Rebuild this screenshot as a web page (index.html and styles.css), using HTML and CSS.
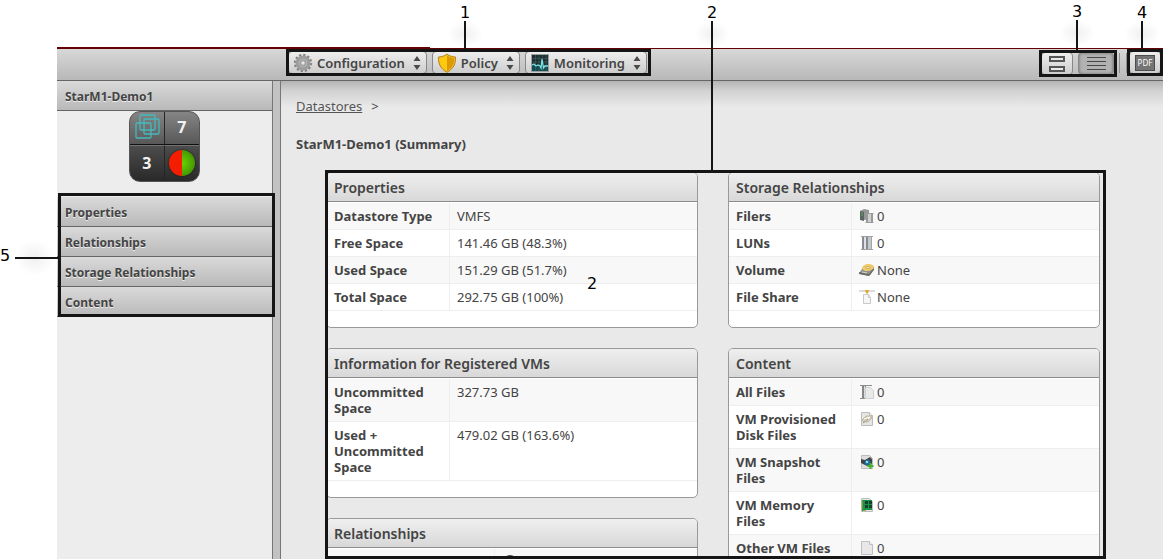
FILE: index.html
```html
<!DOCTYPE html>
<html lang="en">
<head>
<meta charset="utf-8">
<meta name="viewport" content="width=device-width, initial-scale=1">
<title>StarM1-Demo1 (Summary)</title>
<link rel="stylesheet" href="styles.css">
</head>
<body>
<div class="app">
  <header class="toolbar">
    <div class="framed menus">
      <button class="menu-button" type="button">
        <svg class="menu-icon" width="20" height="20" viewBox="0 0 20 20" aria-hidden="true">
          <circle cx="10" cy="10" r="7.700" fill="none" stroke="#858585" stroke-width="3" stroke-dasharray="2.200 1.830"/>
          <circle cx="10" cy="10" r="5" fill="none" stroke="#9c9c9c" stroke-width="5"/>
          <circle cx="10" cy="10" r="4" fill="none" stroke="#b5b5b5" stroke-width="1"/>
          <circle cx="10" cy="10" r="2.200" fill="#e6e6e6" stroke="#858585" stroke-width=".7"/>
        </svg>
        Configuration
        <svg class="arrows" width="8" height="14" viewBox="0 0 8 14" aria-hidden="true"><path d="M4 0 7.500 5H.5zM4 14 .5 9h7z" fill="#4a4a4a"/></svg>
      </button>
      <button class="menu-button" type="button">
        <svg class="menu-icon" width="20" height="20" viewBox="0 0 20 20" aria-hidden="true">
          <path d="M10 1C8 2.700 5 4 1.500 4 1 11 4 16 10 19.300 16 16 19 11 18.500 4 15 4 12 2.700 10 1z" fill="#f3c22e" stroke="#b98218"/>
          <path d="M10 2.500C8 4 6 4.700 2.700 5.200 2.700 11 5.200 15.500 10 18z" fill="#ffc90d"/>
          <path d="M10 2.500c2 1.500 4 2.200 7.300 2.700 0 5.800-2.500 10.300-7.300 12.800z" fill="#dd9a05"/>
        </svg>
        Policy
        <svg class="arrows" width="8" height="14" viewBox="0 0 8 14" aria-hidden="true"><path d="M4 0 7.500 5H.5zM4 14 .5 9h7z" fill="#4a4a4a"/></svg>
      </button>
      <button class="menu-button" type="button">
        <svg class="menu-icon" width="20" height="20" viewBox="0 0 20 20" aria-hidden="true">
          <rect x="1" y="1" width="18" height="18" fill="#9c9f9f"/><rect x="2" y="2" width="16" height="16" fill="#1c2f30"/>
          <path d="M2 13l2-1 2 2 2-1 2 1 1 1 1-1 1 1 5-1v4H2z" fill="#0f4d50"/>
          <path d="M2 5.500h16M2 9h16M2 12.500h16M5.500 2v16M9 2v16M12.500 2v16M16 2v16" stroke="#4c6262" stroke-width=".6"/>
          <path d="M2 12l2-1 2 2 2-1 2 1 1 2 1-9 1.500 9 1.500-2h3" fill="none" stroke="#75e2e4" stroke-width="1.300"/>
        </svg>
        Monitoring
        <svg class="arrows" width="8" height="14" viewBox="0 0 8 14" aria-hidden="true"><path d="M4 0 7.500 5H.5zM4 14 .5 9h7z" fill="#4a4a4a"/></svg>
      </button>
      <span class="callout callout-menus">1</span>
    </div>
    <div class="framed views">
      <button class="tool-button" type="button" aria-label="Stacked view">
        <svg width="18" height="18" viewBox="0 0 18 18" aria-hidden="true"><g fill="#e8e8e8" stroke="#555" stroke-width="2"><path d="M2 2h14v4H2zM2 12h14v4H2z"/></g></svg>
      </button>
      <button class="tool-button pressed" type="button" aria-label="List view" aria-pressed="true">
        <svg width="19" height="15" viewBox="0 0 19 15" aria-hidden="true"><path d="M0 1.500h19M0 5.500h19M0 9.500h19M0 13.500h19" stroke="#484848"/></svg>
      </button>
      <span class="callout callout-views">3</span>
    </div>
    <span class="divider"></span>
    <div class="framed export">
      <button class="tool-button" type="button"><span class="pdf">PDF</span></button>
      <span class="callout callout-export">4</span>
    </div>
  </header>

  <div class="body">
    <aside class="sidebar">
      <h2 class="side-title">StarM1-Demo1</h2>
      <div class="badge">
        <span class="cell"><svg width="26" height="26" viewBox="0 0 26 26" fill="none" stroke="#45b9bd" stroke-width="1.300" aria-hidden="true"><rect x="6" y="1" width="15" height="15" rx="1"/><rect x="10" y="5" width="15" height="15" rx="1"/><rect x="2" y="9" width="15" height="15" rx="1"/></svg></span>
        <span class="cell">7</span>
        <span class="cell">3</span>
        <span class="cell"><span class="health"></span></span>
      </div>
      <nav class="framed side-nav">
        <a href="#properties">Properties</a>
        <a href="#relationships">Relationships</a>
        <a href="#storage">Storage Relationships</a>
        <a href="#content">Content</a>
        <span class="callout callout-nav">5</span>
      </nav>
    </aside>
    <div class="gutter"></div>
    <main class="main">
      <p class="crumbs"><a href="#datastores">Datastores</a><span>&gt;</span></p>
      <h1 class="page-title">StarM1-Demo1 (Summary)</h1>
      <div class="framed report">
        <div class="columns">
          <div class="column">
            <section class="panel" id="properties">
              <h2>Properties</h2>
              <table>
                <tr><th scope="row">Datastore Type</th><td>VMFS</td></tr>
                <tr><th scope="row">Free Space</th><td>141.46 GB (48.3%)</td></tr>
                <tr><th scope="row">Used Space</th><td>151.29 GB (51.7%)</td></tr>
                <tr><th scope="row">Total Space</th><td>292.75 GB (100%)</td></tr>
              </table>
            </section>
            <section class="panel">
              <h2>Information for Registered VMs</h2>
              <table>
                <tr><th scope="row">Uncommitted Space</th><td>327.73 GB</td></tr>
                <tr><th scope="row">Used + Uncommitted Space</th><td>479.02 GB (163.6%)</td></tr>
              </table>
            </section>
            <section class="panel wide-label" id="relationships">
              <h2>Relationships</h2>
              <table>
                <tr><td></td><td><svg class="icon" width="16" height="16" viewBox="0 0 16 16" aria-hidden="true"><circle cx="8" cy="8" r="7" fill="#444"/></svg></td></tr>
              </table>
            </section>
          </div>
          <div class="column">
            <section class="panel" id="storage">
              <h2>Storage Relationships</h2>
              <table>
                <tr><th scope="row">Filers</th><td><svg class="icon" width="16" height="16" viewBox="0 0 16 16" aria-hidden="true"><path d="M1 3l4-2 5 1v9l-4 1-5-1z" fill="#959796"/><path d="M1 3l4 1v9l-4-1z" fill="#5d6560"/><path d="M2 5l2 .5M2 7l2 .5" stroke="#58a365"/><path d="M7 6h7v8H7z" fill="#cfcfcf"/><path d="M7 6h2v8H7zM12 6h2v8h-2z" fill="#999"/><path d="M6.500 5.500h8M6.500 14.500h8" stroke="#9d9d9d"/></svg>0</td></tr>
                <tr><th scope="row">LUNs</th><td><svg class="icon" width="16" height="16" viewBox="0 0 16 16" aria-hidden="true"><path d="M3 2h10v12H3z" fill="#c5c9cc"/><path d="M3 2h2v12H3zM7 2h2v12H7z" fill="#858b91"/><path d="M12 2h1v12h-1z" fill="#a0a5aa"/><path d="M5 2h2v12H5z" fill="#dfe2e4"/><path d="M2 1.500h12M2 14.500h12" stroke="#9da1a5"/></svg>0</td></tr>
                <tr><th scope="row">Volume</th><td><svg class="icon" width="16" height="16" viewBox="0 0 16 16" aria-hidden="true"><path d="M1 10l4-6h10l-3 8-2 2-9-2z" fill="#92928d"/><path d="M0 10l10 2 5-7v3l-5 6-10-2z" fill="#6b6b65"/><ellipse cx="9" cy="5.500" rx="6" ry="3.500" fill="#edcb6d" transform="rotate(-8 9 5.500)"/><ellipse cx="9" cy="5.500" rx="2" ry="1" fill="#fff3bd" stroke="#b08a34" stroke-width=".6"/><path d="M3 10l5 1" stroke="#d5d5d0"/></svg>None</td></tr>
                <tr><th scope="row">File Share</th><td><svg class="icon" width="16" height="16" viewBox="0 0 16 16" aria-hidden="true"><path d="M0 2h16" stroke="#b8b8b8"/><path d="M8 3v2" stroke="#aaa"/><path d="M6 1h4l-1 3H7z" fill="#e4a727"/><path d="M4.500 5.500h5l2 3v6h-7z" fill="#f6f6f6" stroke="#c9c9c9"/><path d="M9.500 5.500v3h2" fill="#ddd" stroke="#c9c9c9"/></svg>None</td></tr>
              </table>
            </section>
            <section class="panel" id="content">
              <h2>Content</h2>
              <table>
                <tr><th scope="row">All Files</th><td><svg class="icon" width="16" height="16" viewBox="0 0 16 16" aria-hidden="true"><path d="M3 2h4v12H3z" fill="#83878a"/><path d="M5 2h1v12H5z" fill="#d8dadb"/><path d="M1 1.500h12M1 14.500h5" stroke="#888d90"/><path d="M6.500 3.500h5l3 3v8h-8z" fill="#e9e9e9" stroke="#cfcfcf"/></svg>0</td></tr>
                <tr><th scope="row">VM Provisioned Disk Files</th><td><svg class="icon" width="16" height="16" viewBox="0 0 16 16" aria-hidden="true"><path d="M2.500 1.500h8l3 3v10h-11z" fill="#e5e5e3" stroke="#bcbcbc"/><path d="M10.500 1.500v3h3" fill="#fff" stroke="#bcbcbc"/><path d="M3 9l4-4h5l1 2-4 4H5z" fill="#d5cebb" stroke="#b5ab93" stroke-width=".7"/><path d="M5 8l6-2-7 6" fill="none" stroke="#fff"/><path d="M4 12l5-4" stroke="#958b72"/></svg>0</td></tr>
                <tr><th scope="row">VM Snapshot Files</th><td><svg class="icon" width="16" height="16" viewBox="0 0 16 16" aria-hidden="true"><path d="M2.500 1.500h8l3 3v10h-11z" fill="#dedede" stroke="#bcbcbc"/><path d="M2 5l4 1 5-3 2 2v5l-5 2-6-3z" fill="#414548"/><circle cx="8.500" cy="8.500" r="2.800" fill="#1a6d9c"/><circle cx="8" cy="8" r="1.300" fill="#88d9f3"/><path d="M11.500 9v6M8.500 12h6" stroke="#43b02e" stroke-width="2"/></svg>0</td></tr>
                <tr><th scope="row">VM Memory Files</th><td><svg class="icon" width="16" height="16" viewBox="0 0 16 16" aria-hidden="true"><path d="M2.500 1.500h8l3 3v10h-11z" fill="#e5e5e5" stroke="#bcbcbc"/><path d="M3 3h10v10H5v1H3z" fill="#179447"/><path d="M6 4h3v3H6zM10 4h3v3h-3zM6 8h3v3H6zM10 8h3v3h-3z" fill="#173f2b"/><path d="M2 5h2M2 7h2M2 9h2M2 11h2M4 13.500h3" stroke="#bba34c"/></svg>0</td></tr>
                <tr><th scope="row">Other VM Files</th><td><svg class="icon" width="16" height="16" viewBox="0 0 16 16" aria-hidden="true"><path d="M2.500 1.500h8l3 3v10h-11z" fill="#e8e8e8" stroke="#c0c0c0"/><path d="M10.500 1.500v3h3" fill="#fafafa" stroke="#c0c0c0"/></svg>0</td></tr>
              </table>
            </section>
          </div>
        </div>
        <span class="callout callout-report">2</span>
        <span class="note">2</span>
      </div>
    </main>
  </div>
</div>
</body>
</html>
```
FILE: styles.css
```css
* { box-sizing: border-box; }
body {
  margin: 0;
  height: 100vh;
  padding: 47px 2px 1px 57px;
  overflow: hidden;
  background: #fff;
  color: #444;
  font: 13px/16px "Noto Sans", "Open Sans", sans-serif;
}
h1, h2, p { margin: 0; }
button { font: inherit; color: inherit; }

.app { display: flex; flex-direction: column; height: 100%; }

/* Top toolbar */
.toolbar {
  display: flex;
  align-items: flex-start;
  height: 34px;
  padding: 2px 0 0 229px;
  background:
    linear-gradient(#600, #600) 0 0 / 373px 2px no-repeat,
    linear-gradient(#600, #600) 0 1px / 100% 1px no-repeat,
    linear-gradient(#fff, #fff) 0 0 / 100% 1px no-repeat,
    linear-gradient(#dadada, #b8b8b8);
  border-bottom: 1px solid #666;
}
.framed { position: relative; }
.framed::after {
  content: "";
  position: absolute;
  inset: 0;
  border: 3px solid #151515;
  pointer-events: none;
}
.menus { display: flex; gap: 5px; height: 27px; padding: 2px 4px 2px 2px; }
.menu-button, .tool-button {
  display: flex;
  align-items: center;
  padding: 0;
  border: 1px solid #888;
  border-radius: 4px;
  background: linear-gradient(#eee, #cdcdcd);
}
.menu-button { gap: 4px; padding: 0 5px 0 4px; font-weight: 600; }
.menu-icon { flex: none; }
.arrows { margin-left: 4px; }
.views { display: flex; gap: 5px; width: 78px; height: 27px; margin: 1px 0 0 auto; padding: 2px; }
.tool-button { justify-content: center; width: 32px; }
.views .tool-button { flex: none; }
.views .pressed { width: 36px; background: #b2b2b2; box-shadow: inset 0 0 3px #666; }
.divider { width: 8px; height: 20px; margin: 4px 0 0 2px; border: solid #909090; border-width: 0 1px; }
.export { display: flex; width: 36px; height: 27px; padding: 2px; }
.pdf {
  padding: 0 2px;
  border: 1px solid #4d4d4d;
  background: #747474;
  color: #fff;
  font-size: 8px;
  line-height: 14px;
}

/* Sidebar */
.body { display: flex; flex: 1; min-height: 0; }
.sidebar { flex: none; width: 215px; background: #ededed; }
.side-title, .side-nav a {
  display: block;
  height: 30px;
  padding: 8px 8px 5px;
  border-bottom: 1px solid #666;
  background: linear-gradient(#dadada, #b9b9b9);
  color: #444;
  font-size: 12px;
  font-weight: 700;
  line-height: 16px;
  text-decoration: none;
  text-shadow: 0 1px 0 #eee;
}
.badge {
  display: grid;
  grid-template-columns: 1fr 1fr;
  grid-template-rows: 33px 1fr;
  width: 71px;
  height: 71px;
  margin: 0 auto 11px;
  overflow: hidden;
  border: 1px solid #555;
  border-radius: 11px;
  background: linear-gradient(#858585, #585858 46%, #4c4c4c 50%, #292929);
  color: #f2f2f2;
  font-size: 16px;
  font-weight: 700;
}
.cell { display: grid; place-items: center; padding-bottom: 2px; }
.cell:nth-child(odd) { border-right: 1px solid #262626; }
.cell:nth-child(-n+2) { border-bottom: 1px solid #111; }
.cell:nth-child(n+3) { border-top: 1px solid #737373; }
.health {
  width: 26px;
  height: 26px;
  border-radius: 50%;
  background:
    linear-gradient(90deg, #f51d00 50%, transparent 50%),
    radial-gradient(circle, #69d400, #367d00);
  box-shadow: 0 0 2px #111;
}
.side-nav { width: 218px; padding: 4px 3px 0 0; }
.side-nav::after { inset: 0 0 0 1px; }
.gutter { flex: none; width: 9px; border: solid #777; border-width: 0 1px; background: #c2c2c2; }

/* Main area */
.main {
  display: flex;
  flex: 1;
  flex-direction: column;
  min-width: 0;
  padding-top: 17px;
  background: linear-gradient(#b4b4b4, #d2d2d2 10px, #e9e9e9 26px);
}
.crumbs, .page-title { padding-left: 15px; }
.crumbs a { margin-right: 9px; color: #555; }
.page-title { margin: 22px 0 18px; font-size: 13px; line-height: 16px; }
.report { flex: 1; min-height: 0; margin: 0 57px 0 44px; }
.columns {
  display: grid;
  grid-template-columns: 1fr 1fr;
  gap: 30px;
  height: 100%;
  padding: 2px 6px 0 1px;
  overflow: hidden;
}
.column { display: flex; flex-direction: column; gap: 20px; }
.panel { flex: none; padding-bottom: 16px; border: 1px solid #999; border-radius: 5px; background: #fff; overflow: hidden; }
.panel h2 {
  margin-bottom: 1px;
  padding: 7px 7px 5px;
  border-bottom: 1px solid #8d8d8d;
  background: linear-gradient(#efefef, #d8d8d8);
  font-size: 14px;
  font-weight: 600;
  line-height: 16px;
}
table { width: 100%; border-collapse: separate; border-spacing: 0; table-layout: fixed; }
th, td { padding: 5px 7px; border-bottom: 1px solid #eee; text-align: left; vertical-align: top; }
th { width: 123px; padding-right: 8px; border-right: 1px solid #eee; font-weight: 700; }
tr:nth-child(odd) { background: #f8f8f8; }
.wide-label td:first-child { width: 168px; border-right: 1px solid #eee; }
.icon { margin-right: 2px; vertical-align: top; }

/* Numbered callouts */
.callout, .note {
  position: absolute;
  color: #000;
  font: 16px/20px "DejaVu Sans", sans-serif;
}
.callout { width: 12px; text-align: center; }
.callout::before, .callout::after { content: ""; position: absolute; }
.callout::before { left: -12px; top: 18px; width: 36px; height: 26px; background: radial-gradient(closest-side, #f0f0f0, transparent); }
.callout::after { left: 5px; top: 18px; width: 2px; height: 30px; background: #151515; }
.callout-menus { left: 173px; top: -46px; }
.callout-views { left: 32px; top: -48px; }
.callout-export { left: 9px; top: -46px; }
.callout-report { left: 381px; top: -167px; }
.callout-report::after { height: 149px; }
.callout-nav { left: -58px; top: 53px; }
.callout-nav::before { left: 16px; top: -6px; width: 40px; height: 36px; }
.callout-nav::after { left: 16px; top: 11px; width: 43px; height: 2px; }
.note { left: 262px; top: 104px; }
```
